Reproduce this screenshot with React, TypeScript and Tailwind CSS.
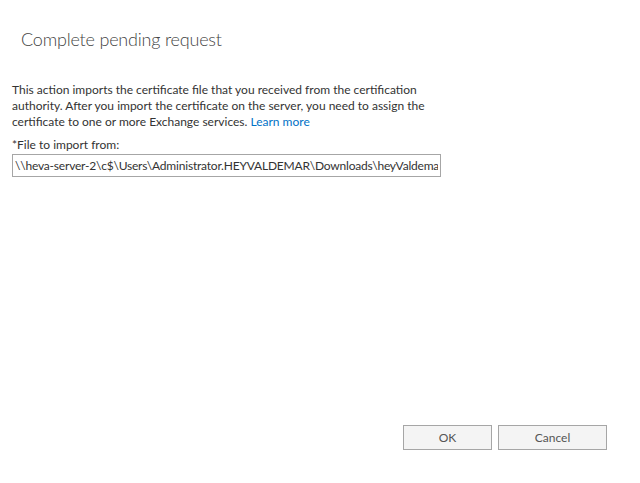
export default function App() {
  return (
    <div
      className="w-[640px] h-[483px] bg-white flex flex-col text-[#333333]"
      style={{ fontFamily: 'Lato, "Open Sans", sans-serif' }}
    >
      {/* Header */}
      <h1 className="pl-[21px] pt-[26px] text-[18px] font-light leading-[26px] tracking-[-0.2px] text-[#444444]">
        Complete pending request
      </h1>

      {/* Body */}
      <div className="pl-[12px] pt-[30px] text-[12px] leading-[16px]">
        <p>
          This action imports the certificate file that you received from the certification
          <br />
          authority. After you import the certificate on the server, you need to assign the
          <br />
          certificate to one or more Exchange services.{' '}
          <a className="text-[#0072c6]" href="#">
            Learn more
          </a>
        </p>
        <label className="block mt-[7px]">*File to import from:</label>
        <input
          readOnly
          value="\\heva-server-2\c$\Users\Administrator.HEYVALDEMAR\Downloads\heyValdemar.cer"
          className="mt-[1px] w-[429px] h-[23px] border border-[#a6a6a6] px-[2px] text-[12px] tracking-[-0.2px] text-[#333333] outline-none"
        />
      </div>

      {/* Footer */}
      <div className="mt-auto mb-[33px] flex justify-end gap-[6px] pr-[33px]">
        <button className="w-[89px] h-[25px] border border-[#a6a6a6] bg-[#f4f4f4] text-[12px] text-[#555555]">
          OK
        </button>
        <button className="w-[109px] h-[25px] border border-[#a6a6a6] bg-[#f4f4f4] text-[12px] text-[#555555]">
          Cancel
        </button>
      </div>
    </div>
  );
}
